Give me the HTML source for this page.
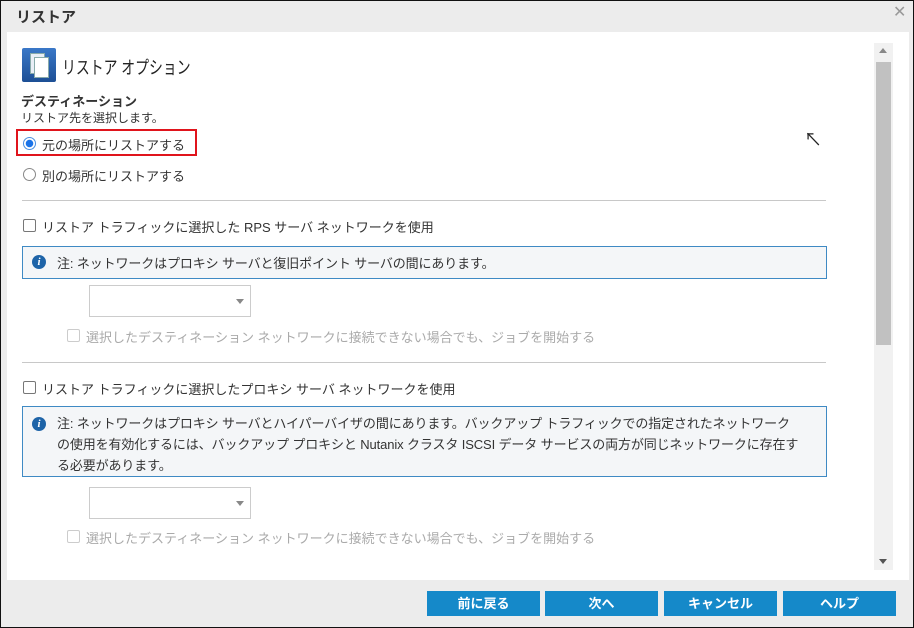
<!DOCTYPE html>
<html><head><meta charset="utf-8"><style>
*{margin:0;padding:0;box-sizing:border-box}
body{width:914px;height:628px;background:#ececec;position:relative;overflow:hidden;font-family:"Liberation Sans","Noto Sans CJK JP",sans-serif;font-size:13px;color:#333}
.frame{position:absolute;left:0;top:0;width:914px;height:628px;border:1px solid #111;z-index:10;pointer-events:none}
.a{position:absolute;white-space:nowrap}
.panel{position:absolute;left:7px;top:32px;width:902px;height:548px;background:#fff}
.hr{position:absolute;left:22px;width:804px;height:1px;background:#c8c8c8}
.cb{position:absolute;width:13px;height:13px;border:1px solid #777;border-radius:2px;background:#fff}
.cb.d{border-color:#ccc}
.info{position:absolute;left:22px;width:805px;border:1px solid #3f8ac4;background:#f4f6f8;padding:6px 8px 6px 34px;line-height:21px;letter-spacing:-0.12px}
.ic{position:absolute;left:9px;width:14px;height:14px;border-radius:50%;background:#1e64a8;color:#fff;font:italic bold 11px "Liberation Serif",serif;text-align:center;line-height:14px;letter-spacing:0}
.sel{position:absolute;left:89px;width:162px;height:32px;border:1px solid #ccc;background:#fff}
.sel:after{content:"";position:absolute;right:6px;top:13px;border:4px solid transparent;border-top:5px solid #888}
.btn{position:absolute;top:591px;height:25px;background:#1589c9;color:#fff;text-align:center;line-height:25px;font-size:13px;font-weight:bold}
.gray{color:#aaa}
</style></head><body>
<div class="frame"></div>
<div class="a" style="left:16px;top:6px;font-size:15px;font-weight:bold;color:#333">リストア</div>
<div class="a" style="left:893px;top:2px;font-size:16px;color:#999">✕</div>
<div class="panel"></div>
<div class="a" style="left:22px;top:48px;width:34px;height:34px;background:linear-gradient(#3a78c8,#1d4f95);border-radius:2px"></div>
<div class="a" style="left:30px;top:53px;width:15px;height:21px;background:#e8eef6;border:1px solid #8aa"></div>
<div class="a" style="left:34px;top:57px;width:15px;height:21px;background:#fff;border:1px solid #8aa"></div>
<div class="a" style="left:62px;top:54px;font-size:18px;color:#222;transform:scaleX(0.77);transform-origin:0 0">リストア オプション</div>
<div class="a" style="left:21px;top:91px;font-weight:bold;font-size:13px">デスティネーション</div>
<div class="a" style="left:21px;top:109px;font-size:12px">リストア先を選択します。</div>
<div class="a" style="left:16px;top:129px;width:181px;height:27px;border:2px solid #e0141c"></div>
<div class="a" style="left:23px;top:137px;width:13px;height:13px;border-radius:50%;border:1px solid #4a8fe0;background:radial-gradient(#1a73e8 3.5px,#fff 4px)"></div>
<div class="a" style="left:42px;top:135px">元の場所にリストアする</div>
<div class="a" style="left:23px;top:168px;width:13px;height:13px;border-radius:50%;border:1px solid #888;background:#fff"></div>
<div class="a" style="left:42px;top:166px">別の場所にリストアする</div>
<div class="a" style="left:804px;top:126px;font-size:18px;color:#222">&#8598;</div>
<div class="hr" style="top:200px"></div>
<div class="cb" style="left:23px;top:219px"></div>
<div class="a" style="left:42px;top:217px">リストア トラフィックに選択した RPS サーバ ネットワークを使用</div>
<div class="info" style="top:246px;height:33px"><div class="ic" style="top:8px">i</div>注: ネットワークはプロキシ サーバと復旧ポイント サーバの間にあります。</div>
<div class="sel" style="top:285px"></div>
<div class="cb d" style="left:67px;top:329px"></div>
<div class="a gray" style="left:86px;top:327px">選択したデスティネーション ネットワークに接続できない場合でも、ジョブを開始する</div>
<div class="hr" style="top:362px"></div>
<div class="cb" style="left:23px;top:381px"></div>
<div class="a" style="left:42px;top:379px">リストア トラフィックに選択したプロキシ サーバ ネットワークを使用</div>
<div class="info" style="top:406px;height:71px;white-space:normal"><div class="ic" style="top:10px">i</div>注: ネットワークはプロキシ サーバとハイパーバイザの間にあります。バックアップ トラフィックでの指定されたネットワーク<br>の使用を有効化するには、バックアップ プロキシと Nutanix クラスタ ISCSI データ サービスの両方が同じネットワークに存在す<br>る必要があります。</div>
<div class="sel" style="top:487px"></div>
<div class="cb d" style="left:67px;top:530px"></div>
<div class="a gray" style="left:86px;top:528px">選択したデスティネーション ネットワークに接続できない場合でも、ジョブを開始する</div>
<div class="a" style="left:874px;top:43px;width:19px;height:527px;background:#f1f1f1"></div>
<div class="a" style="left:876px;top:62px;width:15px;height:283px;background:#c1c1c1"></div>
<div class="a" style="left:879px;top:48px;border:4px solid transparent;border-bottom:5px solid #888;border-top:0"></div>
<div class="a" style="left:879px;top:559px;border:4px solid transparent;border-top:5px solid #555;border-bottom:0"></div>
<div class="btn" style="left:427px;width:113px">前に戻る</div>
<div class="btn" style="left:545px;width:113px">次へ</div>
<div class="btn" style="left:664px;width:113px">キャンセル</div>
<div class="btn" style="left:783px;width:113px">ヘルプ</div>
</body></html>
